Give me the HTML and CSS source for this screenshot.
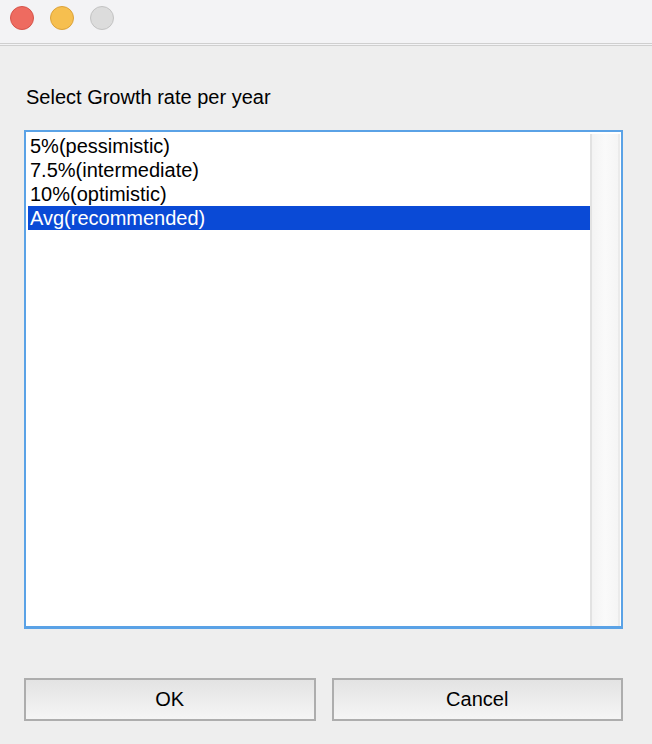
FILE: index.html
```html
<!DOCTYPE html>
<html>
<head>
<meta charset="utf-8">
<link rel="stylesheet" href="styles.css">
</head>
<body>
<div class="window">
  <div class="titlebar">
    <span class="light red"></span>
    <span class="light yellow"></span>
    <span class="light gray"></span>
  </div>
  <div class="content">
    <div class="label">Select Growth rate per year</div>
    <div class="listbox">
      <div class="items">
        <div class="item">5%(pessimistic)</div>
        <div class="item">7.5%(intermediate)</div>
        <div class="item">10%(optimistic)</div>
        <div class="item selected">Avg(recommended)</div>
      </div>
      <div class="scrollbar"></div>
    </div>
    <div class="buttons">
      <div class="btn">OK</div>
      <div class="btn">Cancel</div>
    </div>
  </div>
</div>
</body>
</html>
```
FILE: styles.css
```css
html, body {
  margin: 0;
  padding: 0;
}
body {
  width: 652px;
  height: 744px;
  background: #eeeeee;
  font-family: "Liberation Sans", Arial, sans-serif;
  font-size: 20px;
  color: #000;
  overflow: hidden;
}
.window {
  display: flex;
  flex-direction: column;
  height: 744px;
}
.titlebar {
  background: #f3f3f5;
  border-bottom: 3px double #cfcfcf;
  display: flex;
  align-items: flex-start;
  gap: 16px;
  padding: 6px 0 0 10px;
  box-sizing: border-box;
  height: 46px;
}
.light {
  width: 24px;
  height: 24px;
  border-radius: 50%;
  box-sizing: border-box;
  border: 1px solid;
}
.red { background: #ee6b60; border-color: #d6544a; }
.yellow { background: #f6bf4f; border-color: #dca23a; }
.gray { background: #dcdcdc; border-color: #c3c3c3; }
.content {
  padding: 40px 29px 0 24px;
  display: flex;
  flex-direction: column;
}
.label {
  padding-left: 2px;
  line-height: 23px;
  height: 23px;
}
.listbox {
  margin-top: 21px;
  height: 499px;
  box-sizing: border-box;
  border: 2px solid #5aa2e6;
  border-bottom-width: 3px;
  background: #fff;
  display: flex;
  padding: 2px 1px 0 2px;
}
.items {
  flex: 1;
}
.item {
  height: 23px;
  line-height: 23px;
  padding: 1px 0 0 2px;
}
.item.selected {
  background: #0a4ad6;
  color: #fff;
}
.scrollbar {
  width: 30px;
  box-sizing: border-box;
  border-left: 2px solid #e2e2e2;
  border-right: 2px solid #ebebeb;
  background: linear-gradient(to right, #f3f3f3, #fafafa 50%, #f5f5f5);
}
.buttons {
  margin-top: 49px;
  display: flex;
  gap: 16px;
}
.btn {
  flex: 1;
  height: 43px;
  box-sizing: border-box;
  border: 2px solid #adadad;
  background: linear-gradient(to bottom, #e3e3e3, #f5f5f5);
  display: flex;
  align-items: center;
  justify-content: center;
  line-height: 23px;
}
```
